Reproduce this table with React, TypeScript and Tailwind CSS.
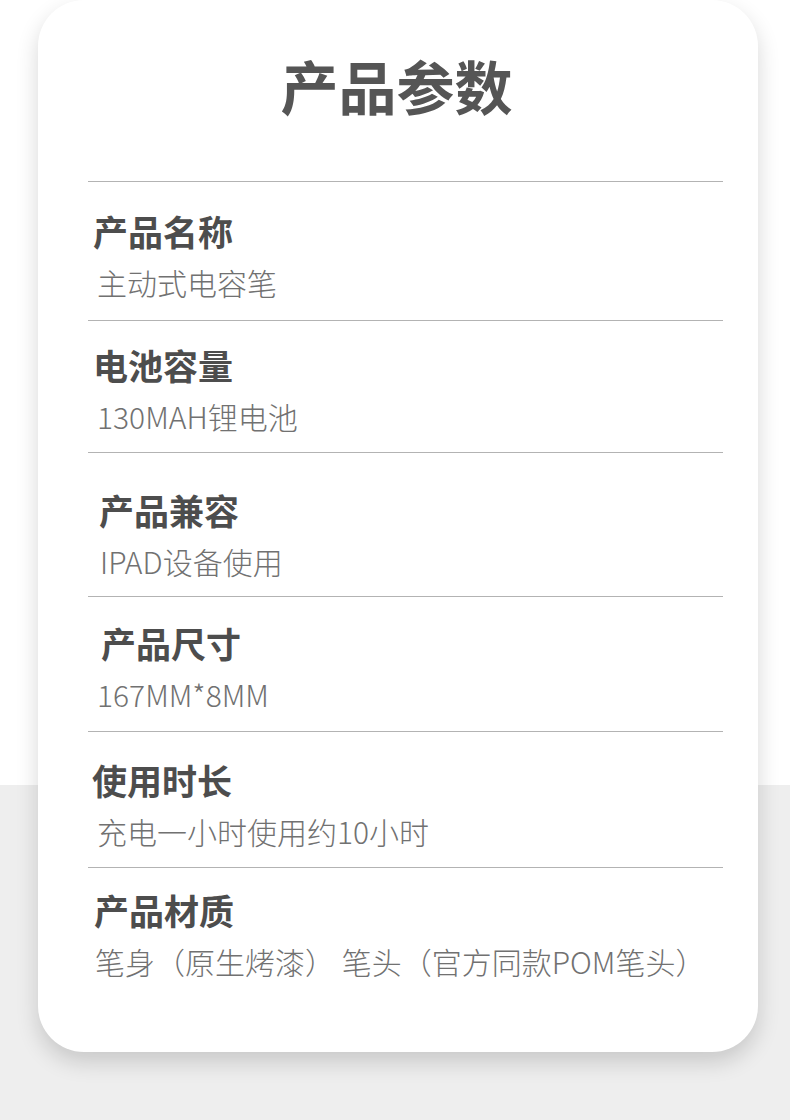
import React from "react";

type Row = {
  label: string;
  value: string;
  h: string;
  pt: string;
  lpl: string;
  vpl: string;
};

const rows: Row[] = [
  { label: "产品名称", value: "主动式电容笔", h: "h-[139px]", pt: "pt-[31px]", lpl: "pl-[5px]", vpl: "pl-[9px]" },
  { label: "电池容量", value: "130MAH锂电池", h: "h-[132px]", pt: "pt-[26px]", lpl: "pl-[5px]", vpl: "pl-[9px]" },
  { label: "产品兼容", value: "IPAD设备使用", h: "h-[144px]", pt: "pt-[39px]", lpl: "pl-[11px]", vpl: "pl-[12px]" },
  { label: "产品尺寸", value: "167MM*8MM", h: "h-[135px]", pt: "pt-[28px]", lpl: "pl-[13px]", vpl: "pl-[9px]" },
  { label: "使用时长", value: "充电一小时使用约10小时", h: "h-[136px]", pt: "pt-[30px]", lpl: "pl-[4px]", vpl: "pl-[9px]" },
  { label: "产品材质", value: "笔身（原生烤漆） 笔头（官方同款POM笔头）", h: "h-[185px]", pt: "pt-[24px]", lpl: "pl-[6px]", vpl: "pl-[7px]" },
];

export default function App() {
  return (
    <div
      className="w-[790px] h-[1120px] overflow-hidden bg-[linear-gradient(to_bottom,#ffffff_785px,#eeeeee_785px)] pl-[38px]"
      style={{ fontFamily: '"Noto Sans CJK SC", "Noto Sans", sans-serif' }}
    >
      <div className="w-[720px] h-[1052px] bg-white rounded-[46px] shadow-[0_10px_22px_rgba(0,0,0,0.16)] pl-[50px] pr-[35px] flex flex-col">
        <div className="h-[181px] pt-[56px] shrink-0">
          <h1 className="text-center text-[58px] leading-none font-bold text-[#555555] mr-[18px]">
            产品参数
          </h1>
        </div>
        {rows.map((r) => (
          <div key={r.label} className={`${r.h} ${r.pt} shrink-0 border-t border-[#b3b3b3]`}>
            <div className={`${r.lpl} text-[35px] leading-none font-bold text-[#4d4d4d]`}>{r.label}</div>
            <div className={`${r.vpl} mt-[19px] text-[30px] leading-none font-light text-[#717171] whitespace-nowrap`}>
              {r.value}
            </div>
          </div>
        ))}
      </div>
    </div>
  );
}
